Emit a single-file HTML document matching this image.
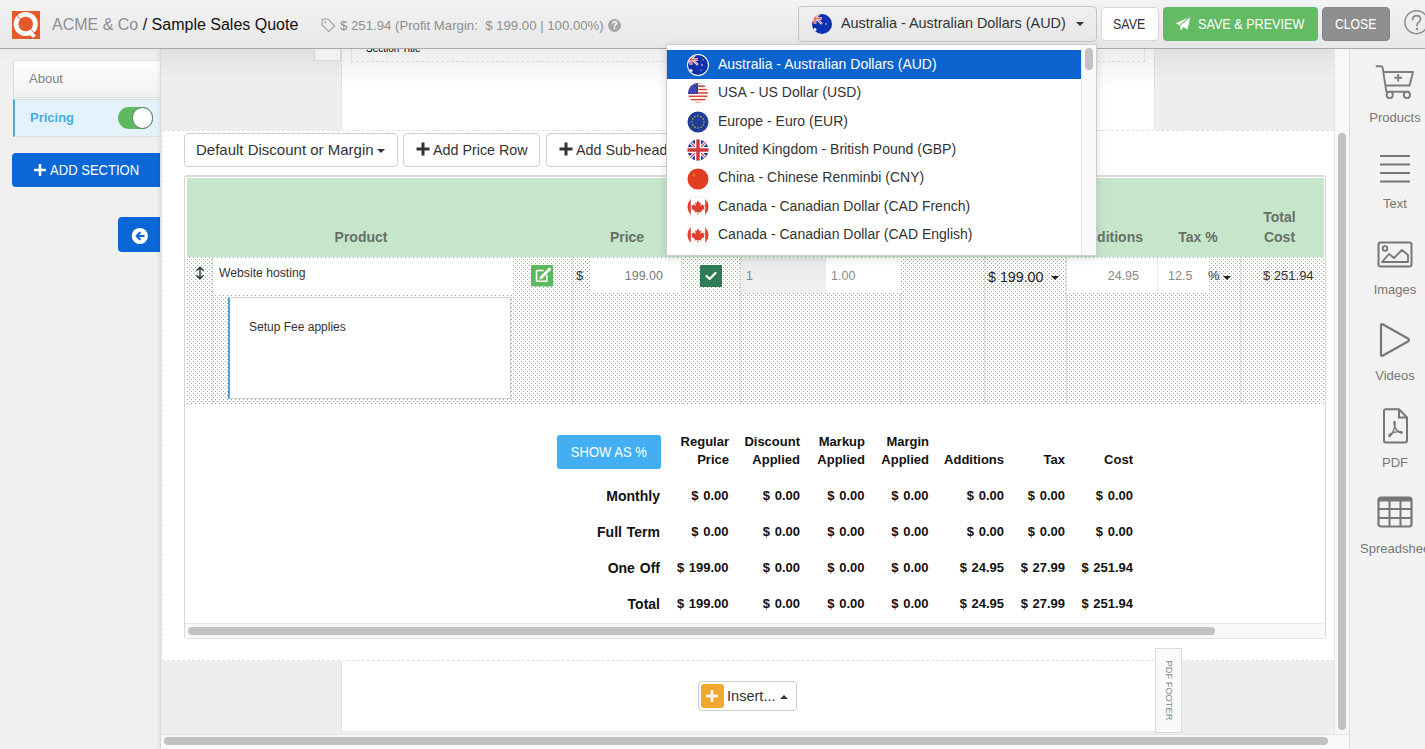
<!DOCTYPE html>
<html><head><meta charset="utf-8">
<style>
*{box-sizing:border-box;margin:0;padding:0}
html,body{width:1425px;height:749px;overflow:hidden;background:#eeeeee;font-family:"Liberation Sans",sans-serif;position:relative}
.a{position:absolute}
.t{position:absolute;white-space:pre;line-height:20px;height:20px}
#hdr{left:0;top:0;width:1425px;height:49px;background:linear-gradient(#f3f3f3,#e7e7e7);border-bottom:1px solid #a9a9a9;z-index:5}
.btn{position:absolute;border-radius:4px;text-align:center;white-space:pre}
</style></head><body>
<!-- left sidebar -->
<div class="a" style="left:0;top:49px;width:160px;height:700px;background:linear-gradient(#e9e9e9,#f0f0f0 12px,#f0f0f0)"></div>
<div class="a" style="left:13px;top:60px;width:160px;height:38px;background:linear-gradient(#fdfdfd,#f1f1f1);border:1px solid #dedede"></div>
<div class="t" style="left:29px;top:69px;font-size:13px;color:#808080">About</div>
<div class="a" style="left:13px;top:99px;width:160px;height:38px;background:#e4f3fb;border:1px solid #d8e3e8;border-left:2px solid #4ba9d9"></div>
<div class="t" style="left:30px;top:108px;font-size:13px;font-weight:700;color:#45aee4">Pricing</div>
<div class="a" style="left:118px;top:107px;width:35px;height:22px;border-radius:11px;background:#5fba5f"></div>
<div class="a" style="left:131.5px;top:107px;width:21.5px;height:22px;border-radius:11px;background:#fff;border:1px solid #4f7a55"></div>
<div class="btn" style="left:12px;top:153px;width:160px;height:34px;background:#0967d6;border-radius:4px"></div>
<svg class="a" style="left:34px;top:164px" width="12" height="12" viewBox="0 0 12 12"><path d="M6 0 V12 M0 6 H12" stroke="#fff" stroke-width="2.6"/></svg>
<div class="t" style="left:50px;top:160px;font-size:14.5px;color:#fff;transform:scaleX(0.9);transform-origin:0 0">ADD SECTION</div>
<div class="btn" style="left:118px;top:217px;width:50px;height:35px;background:#0967d6;border-radius:4px"></div>
<svg class="a" style="left:131px;top:227px" width="17" height="17" viewBox="0 0 16 16">
  <circle cx="8.3" cy="8.5" r="7.6" fill="#fff"/>
  <path d="M12 8.5 H5.3 M8.3 5.5 L5.3 8.5 L8.3 11.5" fill="none" stroke="#0967d6" stroke-width="2" stroke-linecap="round" stroke-linejoin="round"/>
</svg>

<!-- main canvas -->
<div class="a" style="left:160px;top:49px;width:1190px;height:700px;background:#eeeeee;border-left:1px solid #dadada;box-shadow:-1px 0 3px rgba(0,0,0,0.08)"></div>
<!-- top shadow under header -->
<div class="a" style="left:161px;top:49px;width:1173px;height:30px;background:linear-gradient(rgba(0,0,0,0.06),rgba(0,0,0,0))"></div>
<!-- page (top) -->
<div class="a" style="left:341px;top:49px;width:814px;height:82px;background:#fff;border-left:1px solid #e4e4e4;border-right:1px solid #e4e4e4"></div>
<div class="a" style="left:341px;top:49px;width:814px;height:40px;background:linear-gradient(rgba(0,0,0,0.07),rgba(0,0,0,0))"></div>
<div class="a" style="left:314px;top:49px;width:27px;height:12px;background:#f1f1f1;border:1px solid #d8d8d8;border-top:none"></div>
<div class="a" style="left:351px;top:40px;width:794px;height:22px;border:1px dashed #d9d9d9;overflow:hidden"></div>
<div class="t" style="left:366px;top:39px;font-size:10px;color:#000">Section Title</div>

<!-- pricing panel -->
<div class="a" style="left:162px;top:130px;width:1172px;height:531px;background:#fff;border-top:1px dashed #e0e0e0;border-bottom:1px dashed #e0e0e0;border-left:1px dashed #e8e8e8"></div>

<!-- toolbar buttons -->
<div class="btn" style="left:184px;top:133px;width:214px;height:34px;background:#fff;border:1px solid #cfcfcf;border-radius:4px"></div>
<div class="t" style="left:196px;top:140px;font-size:15px;color:#333">Default Discount or Margin</div>
<div class="a" style="left:377px;top:149px;width:0;height:0;border-left:4px solid transparent;border-right:4px solid transparent;border-top:4px solid #333"></div>
<div class="btn" style="left:403px;top:133px;width:137px;height:34px;background:#fff;border:1px solid #cfcfcf;border-radius:4px"></div>
<svg class="a" style="left:416px;top:142px" width="14" height="14" viewBox="0 0 14 14"><path d="M7 0.5 V13.5 M0.5 7 H13.5" stroke="#333" stroke-width="3"/></svg>
<div class="t" style="left:433px;top:140px;font-size:14.3px;color:#333">Add Price Row</div>
<div class="btn" style="left:546px;top:133px;width:137px;height:34px;background:#fff;border:1px solid #cfcfcf;border-radius:4px"></div>
<svg class="a" style="left:559px;top:142px" width="14" height="14" viewBox="0 0 14 14"><path d="M7 0.5 V13.5 M0.5 7 H13.5" stroke="#333" stroke-width="3"/></svg>
<div class="t" style="left:576px;top:140px;font-size:14.3px;color:#333">Add Sub-heading</div>

<!-- table container -->
<div class="a" style="left:184px;top:175px;width:1142px;height:464px;background:#fff;border:1px solid #d6d6d6;border-top:2px solid #dadada;border-bottom:2px solid #e2e2e2;border-radius:3px"></div>
<!-- green header -->
<div class="a" style="left:187px;top:178px;width:1137px;height:79px;background:#c6e6cb"></div>
<div class="t" style="left:186px;width:350px;text-align:center;top:227px;font-size:14px;font-weight:700;color:#687068">Product</div>
<div class="t" style="left:573px;width:108px;text-align:center;top:227px;font-size:14px;font-weight:700;color:#687068">Price</div>
<div class="t" style="left:1066px;width:77px;text-align:right;top:227px;font-size:14px;font-weight:700;color:#687068">Additions</div>
<div class="t" style="left:1156px;width:84px;text-align:center;top:227px;font-size:14px;font-weight:700;color:#687068">Tax %</div>
<div class="t" style="left:1240px;width:79px;text-align:center;top:207px;font-size:14px;font-weight:700;color:#687068;line-height:20px;height:40px">Total
Cost</div>

<!-- dotted row -->
<svg class="a" style="left:187px;top:257px" width="1137" height="147">
  <defs><pattern id="dots" width="4" height="4" patternUnits="userSpaceOnUse">
    <rect width="4" height="4" fill="#fff"/>
    <rect x="2" y="0" width="1" height="1" fill="#8ea78e"/>
    <rect x="0" y="2" width="1" height="1" fill="#8ea78e"/>
  </pattern></defs>
  <rect width="1137" height="147" fill="url(#dots)"/>
  <path d="M25.5 0 V147 M385.5 0 V147 M494.5 0 V147 M553.5 0 V147 M713.5 0 V147 M797.5 0 V147 M879.5 0 V147 M1053.5 0 V147" stroke="#d9e2d9" stroke-width="1"/>
</svg>
<!-- drag handle -->
<svg class="a" style="left:195px;top:266px" width="10" height="14" viewBox="0 0 10 14">
  <path d="M5 1.5 V12.5" stroke="#2a3f30" stroke-width="1.5"/>
  <path d="M2 4.3 L5 1.2 L8 4.3 M2 9.7 L5 12.8 L8 9.7" fill="none" stroke="#2a3f30" stroke-width="1.6" stroke-linejoin="round" stroke-linecap="round"/>
</svg>
<div class="a" style="left:213px;top:258px;width:299px;height:36px;background:#fff"></div>
<div class="t" style="left:219px;top:263px;font-size:12.2px;color:#333">Website hosting</div>
<!-- edit btn -->
<svg class="a" style="left:531px;top:265px" width="22" height="22" viewBox="0 0 22 22">
  <rect x="0" y="0" width="22" height="21.5" rx="1.5" fill="#5cb85c"/>
  <path d="M12.5 5.5 H6 Q5.5 5.5 5.5 6 V15.8 Q5.5 16.3 6 16.3 H15.3 Q15.8 16.3 15.8 15.8 V10" fill="none" stroke="#fff" stroke-width="1.6"/>
  <path d="M9.5 13.2 L17 5.7" stroke="#fff" stroke-width="3" stroke-linecap="butt"/>
  <path d="M17.6 5.1 L18.6 4.1" stroke="#fff" stroke-width="3" stroke-linecap="round"/>
  <path d="M8.3 14.6 L9.2 12.2 L10.6 13.6 Z" fill="#fff"/>
</svg>
<div class="t" style="left:576px;top:266px;font-size:13px;color:#333">$</div>
<div class="a" style="left:590px;top:258px;width:91px;height:35px;background:#fff"></div>
<div class="t" style="left:590px;width:73px;text-align:right;top:266px;font-size:12.5px;color:#7a7a7a">199.00</div>
<!-- checkbox -->
<div class="a" style="left:700px;top:265px;width:22px;height:22px;background:#2e7c55;border-radius:1px"></div>
<svg class="a" style="left:704px;top:269px" width="14" height="14" viewBox="0 0 14 14">
  <path d="M2.5 7 L5.7 10 L11.5 4" fill="none" stroke="#fff" stroke-width="2.2" stroke-linecap="round" stroke-linejoin="round"/>
</svg>
<div class="a" style="left:741px;top:258px;width:85px;height:35px;background:linear-gradient(#ebebeb,#f0f0f0)"></div>
<div class="t" style="left:746px;top:266px;font-size:12.5px;color:#888">1</div>
<div class="a" style="left:826px;top:258px;width:75px;height:35px;background:#fff"></div>
<div class="t" style="left:831px;top:266px;font-size:12.5px;color:#888">1.00</div>
<div class="t" style="left:988px;top:267px;font-size:15px;color:#222;transform:scaleX(0.95);transform-origin:0 0">$ 199.00</div>
<div class="a" style="left:1051px;top:275.5px;width:0;height:0;border-left:4px solid transparent;border-right:4px solid transparent;border-top:4px solid #222"></div>
<div class="a" style="left:1067px;top:258px;width:90px;height:35px;background:#fff"></div>
<div class="t" style="left:1067px;width:72px;text-align:right;top:266px;font-size:12.5px;color:#888">24.95</div>
<div class="a" style="left:1157px;top:258px;width:51px;height:35px;background:#fff;border-left:1px solid #e8e8e8"></div>
<div class="t" style="left:1168px;top:266px;font-size:12.5px;color:#888">12.5</div>
<div class="t" style="left:1208px;top:266px;font-size:13px;color:#333">%</div>
<div class="a" style="left:1222.5px;top:275.5px;width:0;height:0;border-left:4px solid transparent;border-right:4px solid transparent;border-top:4px solid #222"></div>
<div class="t" style="left:1263px;top:266px;font-size:13px;color:#333">$ 251.94</div>
<!-- note -->
<div class="a" style="left:228px;top:297px;width:283px;height:102px;background:#fff;border:1px solid #d0d0d0;border-left:2px solid #4ba3df"></div>
<div class="t" style="left:249px;top:317px;font-size:12px;color:#333">Setup Fee applies</div>

<!-- summary -->
<div class="btn" style="left:557px;top:435px;width:104px;height:34px;background:#44aef2;border-radius:3px;color:#fff;font-size:14px;line-height:34px"><span style="display:inline-block;transform:scaleX(0.93)">SHOW AS %</span></div>
<div style="position:absolute;left:0;top:0;font-size:13px;font-weight:700;color:#111">
  <div class="t" style="left:629px;width:100px;text-align:right;top:432px">Regular</div>
  <div class="t" style="left:629px;width:100px;text-align:right;top:450px">Price</div>
  <div class="t" style="left:700px;width:100px;text-align:right;top:432px">Discount</div>
  <div class="t" style="left:700px;width:100px;text-align:right;top:450px">Applied</div>
  <div class="t" style="left:765px;width:100px;text-align:right;top:432px">Markup</div>
  <div class="t" style="left:765px;width:100px;text-align:right;top:450px">Applied</div>
  <div class="t" style="left:829px;width:100px;text-align:right;top:432px">Margin</div>
  <div class="t" style="left:829px;width:100px;text-align:right;top:450px">Applied</div>
  <div class="t" style="left:904px;width:100px;text-align:right;top:450px">Additions</div>
  <div class="t" style="left:965px;width:100px;text-align:right;top:450px">Tax</div>
  <div class="t" style="left:1033px;width:100px;text-align:right;top:450px">Cost</div>
</div>
<div id="sumrows" style="position:absolute;left:0;top:1px;font-size:13px;font-weight:700;color:#111;word-spacing:1px"><div class="t" style="left:500px;width:160px;text-align:right;top:485px;font-size:14px">Monthly</div><div class="t" style="left:628.5px;width:100px;text-align:right;top:485px">$ 0.00</div><div class="t" style="left:700px;width:100px;text-align:right;top:485px">$ 0.00</div><div class="t" style="left:764.5px;width:100px;text-align:right;top:485px">$ 0.00</div><div class="t" style="left:828.5px;width:100px;text-align:right;top:485px">$ 0.00</div><div class="t" style="left:904px;width:100px;text-align:right;top:485px">$ 0.00</div><div class="t" style="left:965px;width:100px;text-align:right;top:485px">$ 0.00</div><div class="t" style="left:1033px;width:100px;text-align:right;top:485px">$ 0.00</div><div class="t" style="left:500px;width:160px;text-align:right;top:521px;font-size:14px">Full Term</div><div class="t" style="left:628.5px;width:100px;text-align:right;top:521px">$ 0.00</div><div class="t" style="left:700px;width:100px;text-align:right;top:521px">$ 0.00</div><div class="t" style="left:764.5px;width:100px;text-align:right;top:521px">$ 0.00</div><div class="t" style="left:828.5px;width:100px;text-align:right;top:521px">$ 0.00</div><div class="t" style="left:904px;width:100px;text-align:right;top:521px">$ 0.00</div><div class="t" style="left:965px;width:100px;text-align:right;top:521px">$ 0.00</div><div class="t" style="left:1033px;width:100px;text-align:right;top:521px">$ 0.00</div><div class="t" style="left:500px;width:160px;text-align:right;top:557px;font-size:14px">One Off</div><div class="t" style="left:628.5px;width:100px;text-align:right;top:557px">$ 199.00</div><div class="t" style="left:700px;width:100px;text-align:right;top:557px">$ 0.00</div><div class="t" style="left:764.5px;width:100px;text-align:right;top:557px">$ 0.00</div><div class="t" style="left:828.5px;width:100px;text-align:right;top:557px">$ 0.00</div><div class="t" style="left:904px;width:100px;text-align:right;top:557px">$ 24.95</div><div class="t" style="left:965px;width:100px;text-align:right;top:557px">$ 27.99</div><div class="t" style="left:1033px;width:100px;text-align:right;top:557px">$ 251.94</div><div class="t" style="left:500px;width:160px;text-align:right;top:593px;font-size:14px">Total</div><div class="t" style="left:628.5px;width:100px;text-align:right;top:593px">$ 199.00</div><div class="t" style="left:700px;width:100px;text-align:right;top:593px">$ 0.00</div><div class="t" style="left:764.5px;width:100px;text-align:right;top:593px">$ 0.00</div><div class="t" style="left:828.5px;width:100px;text-align:right;top:593px">$ 0.00</div><div class="t" style="left:904px;width:100px;text-align:right;top:593px">$ 24.95</div><div class="t" style="left:965px;width:100px;text-align:right;top:593px">$ 27.99</div><div class="t" style="left:1033px;width:100px;text-align:right;top:593px">$ 251.94</div></div>

<!-- table scrollbar -->
<div class="a" style="left:185px;top:623px;width:1140px;height:15px;background:#f8f8f8;border-top:1px solid #e8e8e8"></div>
<div class="a" style="left:188px;top:627px;width:1027px;height:8px;background:#c1c1c1;border-radius:4px"></div>

<!-- page bottom -->
<div class="a" style="left:341px;top:661px;width:814px;height:71px;background:#fff;border-left:1px solid #e2e2e2;border-bottom:1px solid #e6e6e6"></div>
<div class="a" style="left:1155px;top:648px;width:27px;height:85px;background:#fafafa;border:1px solid #dadada"></div>
<div class="a" style="left:1155px;top:648px;width:85px;height:27px;transform-origin:0 0;transform:translate(27px,0) rotate(90deg);text-align:center;line-height:27px;font-size:9.3px;color:#888;white-space:pre">PDF FOOTER</div>
<div class="btn" style="left:698px;top:681px;width:99px;height:30px;background:#fff;border:1px solid #cccccc;border-radius:4px"></div>
<div class="a" style="left:701px;top:684px;width:23px;height:24px;background:#f0a92e;border-radius:3px"></div>
<svg class="a" style="left:705px;top:689px" width="14" height="14" viewBox="0 0 14 14"><path d="M7 1 V13 M1 7 H13" stroke="#fff" stroke-width="2.7"/></svg>
<div class="t" style="left:727px;top:686px;font-size:15px;color:#333;transform:scaleX(0.97);transform-origin:0 0">Insert...</div>
<div class="a" style="left:780px;top:695px;width:0;height:0;border-left:4px solid transparent;border-right:4px solid transparent;border-bottom:4px solid #333"></div>

<!-- vertical scrollbar -->
<div class="a" style="left:1334px;top:49px;width:15px;height:685px;background:#f8f8f8;border-left:1px solid #e6e6e6"></div>
<div class="a" style="left:1338px;top:133px;width:8px;height:597px;background:#c1c1c1;border-radius:4px"></div>
<!-- horizontal scrollbar -->
<div class="a" style="left:161px;top:734px;width:1188px;height:15px;background:#f8f8f8;border-top:1px solid #e6e6e6"></div>
<div class="a" style="left:164px;top:737px;width:1164px;height:8px;background:#c1c1c1;border-radius:4px"></div>

<!-- right sidebar -->
<div class="a" style="left:1349px;top:49px;width:76px;height:700px;background:#f2f2f2;border-left:1px solid #dcdcdc"></div>
<svg class="a" style="left:1375px;top:64px" width="40" height="36" viewBox="0 0 40 36">
  <path d="M1.5 2.2 H6.2 Q7.4 2.2 7.6 3.4 L11.4 27.8 H34" fill="none" stroke="#7c7c7c" stroke-width="1.9" stroke-linejoin="round" stroke-linecap="round"/>
  <path d="M8.6 8 H38 L34.6 21.5 H10.6" fill="none" stroke="#7c7c7c" stroke-width="1.9" stroke-linejoin="round"/>
  <circle cx="14.7" cy="31" r="3.1" fill="none" stroke="#7c7c7c" stroke-width="1.9"/>
  <circle cx="31.9" cy="31" r="3.1" fill="none" stroke="#7c7c7c" stroke-width="1.9"/>
  <path d="M23.2 10 V17.5 M19.4 13.8 H27" stroke="#7c7c7c" stroke-width="1.9"/>
</svg>
<div class="t" style="left:1355px;width:80px;text-align:center;top:108px;font-size:13px;color:#777">Products</div>
<svg class="a" style="left:1379px;top:154px" width="32" height="30" viewBox="0 0 32 30">
  <path d="M1 2 H31 M1 10.5 H31 M1 19 H31 M1 27.5 H31" stroke="#777" stroke-width="2"/>
</svg>
<div class="t" style="left:1355px;width:80px;text-align:center;top:194px;font-size:13px;color:#777">Text</div>
<svg class="a" style="left:1377px;top:241px" width="36" height="28" viewBox="0 0 36 28">
  <rect x="1.5" y="1.5" width="33" height="24" rx="2" fill="none" stroke="#777" stroke-width="2"/>
  <circle cx="8" cy="7.5" r="2.3" fill="none" stroke="#777" stroke-width="1.8"/>
  <path d="M5 21 L12 13 L17 17 L25 9 L31 14 V21 Z" fill="none" stroke="#777" stroke-width="1.8" stroke-linejoin="round"/>
</svg>
<div class="t" style="left:1355px;width:80px;text-align:center;top:280px;font-size:13px;color:#777">Images</div>
<svg class="a" style="left:1378px;top:322px" width="34" height="36" viewBox="0 0 34 36">
  <path d="M3 3.5 Q3 1.5 5 2.5 L30 16.5 Q32 18 30 19.5 L5 33.5 Q3 34.5 3 32.5 Z" fill="none" stroke="#777" stroke-width="2.2" stroke-linejoin="round"/>
</svg>
<div class="t" style="left:1355px;width:80px;text-align:center;top:366px;font-size:13px;color:#777">Videos</div>
<svg class="a" style="left:1382px;top:408px" width="27" height="36" viewBox="0 0 27 36">
  <path d="M2 3 Q2 1.2 4 1.2 H17 L25 9.5 V32.5 Q25 34.5 23 34.5 H4 Q2 34.5 2 32.5 Z" fill="none" stroke="#777" stroke-width="2" stroke-linejoin="round"/>
  <path d="M17 1.2 V9.5 H25" fill="none" stroke="#777" stroke-width="2"/>
  <path d="M8 26 Q6 28 7.5 28.5 Q10 28 13 18 Q13.5 13 12.3 13.5 Q11 15 14 21 Q17 25 20 25 Q21 23.5 17 23.5 Q13 23.5 8 26 Z" fill="none" stroke="#777" stroke-width="1.4" stroke-linejoin="round"/>
</svg>
<div class="t" style="left:1355px;width:80px;text-align:center;top:453px;font-size:13px;color:#777">PDF</div>
<svg class="a" style="left:1377px;top:496px" width="36" height="32" viewBox="0 0 36 32">
  <rect x="1.5" y="1.5" width="33" height="29" rx="2.5" fill="none" stroke="#777" stroke-width="2.2"/>
  <rect x="1.5" y="1.5" width="33" height="4" fill="#777"/>
  <path d="M1.5 13 H34.5 M1.5 22 H34.5 M12.5 1.5 V30.5 M23.5 1.5 V30.5" stroke="#777" stroke-width="2"/>
</svg>
<div class="t" style="left:1360px;top:539px;font-size:13px;color:#777">Spreadsheet</div>

<!-- dropdown -->
<div class="a" style="left:666px;top:44px;width:431px;height:212px;background:#fff;border:1px solid #cdcdcd;box-shadow:0 3px 9px rgba(0,0,0,0.13);overflow:hidden;z-index:6">
<div class="a" style="left:0;top:5px;width:414px;height:29px;background:#0b63ce"></div>
<div class="a" style="left:20px;top:8.7px"><svg width="22" height="22" viewBox="0 0 22 22"><defs><clipPath id="cl0"><circle cx="11" cy="11" r="10"/></clipPath></defs>
<circle cx="11" cy="11" r="11" fill="#fff"/>
<g clip-path="url(#cl0)"><rect width="22" height="22" fill="#0d30ad"/>
<path d="M-2 -1 L11 11 M10 -1 L-2 11" stroke="#fff" stroke-width="2.2"/><path d="M-2 -1 L11 11 M10 -1 L-2 11" stroke="#e0514a" stroke-width="0.9"/>
<path d="M4 -1 V11 M-2 5.5 H11" stroke="#fff" stroke-width="2.6"/><path d="M4 -1 V11 M-2 5.5 H11" stroke="#e6604f" stroke-width="1.5"/>
<circle cx="4" cy="16.5" r="1.5" fill="#fff"/><circle cx="15" cy="11" r="0.8" fill="#fff"/><circle cx="16" cy="6" r="0.6" fill="#fff"/><circle cx="14" cy="16" r="0.6" fill="#fff"/></g></svg></div>
<div class="t" style="left:51px;top:8.6px;font-size:14px;color:#fff">Australia - Australian Dollars (AUD)</div>
<div class="a" style="left:20px;top:37.2px"><svg width="22" height="22" viewBox="0 0 22 22"><defs><clipPath id="cl1"><circle cx="11" cy="11" r="10"/></clipPath></defs>
<g clip-path="url(#cl1)"><rect x="0" y="0.00" width="22" height="1.69" fill="#d9463a"/><rect x="0" y="1.69" width="22" height="1.69" fill="#fff"/><rect x="0" y="3.38" width="22" height="1.69" fill="#d9463a"/><rect x="0" y="5.08" width="22" height="1.69" fill="#fff"/><rect x="0" y="6.77" width="22" height="1.69" fill="#d9463a"/><rect x="0" y="8.46" width="22" height="1.69" fill="#fff"/><rect x="0" y="10.15" width="22" height="1.69" fill="#d9463a"/><rect x="0" y="11.85" width="22" height="1.69" fill="#fff"/><rect x="0" y="13.54" width="22" height="1.69" fill="#d9463a"/><rect x="0" y="15.23" width="22" height="1.69" fill="#fff"/><rect x="0" y="16.92" width="22" height="1.69" fill="#d9463a"/><rect x="0" y="18.62" width="22" height="1.69" fill="#fff"/><rect x="0" y="20.31" width="22" height="1.69" fill="#d9463a"/><rect width="11" height="11.8" fill="#2f3aa6"/><circle cx="2.0" cy="2.2" r="0.45" fill="#aab0ff"/><circle cx="4.2" cy="2.2" r="0.45" fill="#aab0ff"/><circle cx="6.4" cy="2.2" r="0.45" fill="#aab0ff"/><circle cx="8.6" cy="2.2" r="0.45" fill="#aab0ff"/><circle cx="3.1" cy="4.1" r="0.45" fill="#aab0ff"/><circle cx="5.3" cy="4.1" r="0.45" fill="#aab0ff"/><circle cx="7.5" cy="4.1" r="0.45" fill="#aab0ff"/><circle cx="9.7" cy="4.1" r="0.45" fill="#aab0ff"/><circle cx="2.0" cy="6.0" r="0.45" fill="#aab0ff"/><circle cx="4.2" cy="6.0" r="0.45" fill="#aab0ff"/><circle cx="6.4" cy="6.0" r="0.45" fill="#aab0ff"/><circle cx="8.6" cy="6.0" r="0.45" fill="#aab0ff"/><circle cx="3.1" cy="7.9" r="0.45" fill="#aab0ff"/><circle cx="5.3" cy="7.9" r="0.45" fill="#aab0ff"/><circle cx="7.5" cy="7.9" r="0.45" fill="#aab0ff"/><circle cx="9.7" cy="7.9" r="0.45" fill="#aab0ff"/><circle cx="2.0" cy="9.8" r="0.45" fill="#aab0ff"/><circle cx="4.2" cy="9.8" r="0.45" fill="#aab0ff"/><circle cx="6.4" cy="9.8" r="0.45" fill="#aab0ff"/><circle cx="8.6" cy="9.8" r="0.45" fill="#aab0ff"/></g></svg></div>
<div class="t" style="left:51px;top:37.1px;font-size:14px;color:#333">USA - US Dollar (USD)</div>
<div class="a" style="left:20px;top:65.6px"><svg width="22" height="22" viewBox="0 0 22 22"><circle cx="11" cy="11" r="10.5" fill="#1f3c99"/><circle cx="17.00" cy="11.00" r="0.7" fill="#f5d130"/><circle cx="16.20" cy="14.00" r="0.7" fill="#f5d130"/><circle cx="14.00" cy="16.20" r="0.7" fill="#f5d130"/><circle cx="11.00" cy="17.00" r="0.7" fill="#f5d130"/><circle cx="8.00" cy="16.20" r="0.7" fill="#f5d130"/><circle cx="5.80" cy="14.00" r="0.7" fill="#f5d130"/><circle cx="5.00" cy="11.00" r="0.7" fill="#f5d130"/><circle cx="5.80" cy="8.00" r="0.7" fill="#f5d130"/><circle cx="8.00" cy="5.80" r="0.7" fill="#f5d130"/><circle cx="11.00" cy="5.00" r="0.7" fill="#f5d130"/><circle cx="14.00" cy="5.80" r="0.7" fill="#f5d130"/><circle cx="16.20" cy="8.00" r="0.7" fill="#f5d130"/></svg></div>
<div class="t" style="left:51px;top:65.5px;font-size:14px;color:#333">Europe - Euro (EUR)</div>
<div class="a" style="left:20px;top:94.0px"><svg width="22" height="22" viewBox="0 0 22 22"><defs><clipPath id="cl3"><circle cx="11" cy="11" r="10.5"/></clipPath></defs>
<g clip-path="url(#cl3)"><rect width="22" height="22" fill="#22409a"/>
<path d="M0 0 L22 22 M22 0 L0 22" stroke="#fff" stroke-width="3.2"/><path d="M0 0 L22 22 M22 0 L0 22" stroke="#cf3a3d" stroke-width="1.2"/>
<path d="M11 0 V22 M0 11 H22" stroke="#fff" stroke-width="6"/><path d="M11 0 V22 M0 11 H22" stroke="#cf3a3d" stroke-width="3.4"/></g></svg></div>
<div class="t" style="left:51px;top:93.9px;font-size:14px;color:#333">United Kingdom - British Pound (GBP)</div>
<div class="a" style="left:20px;top:122.5px"><svg width="22" height="22" viewBox="0 0 22 22"><circle cx="11" cy="11" r="10.5" fill="#e23d22"/><circle cx="7" cy="7" r="1.6" fill="#f1c232" opacity="0.35"/></svg></div>
<div class="t" style="left:51px;top:122.4px;font-size:14px;color:#333">China - Chinese Renminbi (CNY)</div>
<div class="a" style="left:20px;top:150.9px"><svg width="22" height="22" viewBox="0 0 22 22"><defs><clipPath id="cl5"><circle cx="11" cy="11" r="10.5"/></clipPath></defs>
<circle cx="11" cy="11" r="10.7" fill="#fff" stroke="#e8e8e8" stroke-width="0.6"/>
<g clip-path="url(#cl5)"><rect x="0" y="0" width="3.8" height="22" fill="#e0402f"/><rect x="18.2" y="0" width="3.8" height="22" fill="#e0402f"/></g>
<path d="M11 4.2 L12.4 7 L13.9 6.3 L13.4 10 L15.6 8.2 L16.1 9.6 L17.8 9.3 L16.9 11.9 L17.8 12.5 L13.9 15.2 L14.2 16.5 L11.4 16 V19 H10.6 V16 L7.8 16.5 L8.1 15.2 L4.2 12.5 L5.1 11.9 L4.2 9.3 L5.9 9.6 L6.4 8.2 L8.6 10 L8.1 6.3 L9.6 7 Z" fill="#e0402f"/></svg></div>
<div class="t" style="left:51px;top:150.8px;font-size:14px;color:#333">Canada - Canadian Dollar (CAD French)</div>
<div class="a" style="left:20px;top:179.4px"><svg width="22" height="22" viewBox="0 0 22 22"><defs><clipPath id="cl6"><circle cx="11" cy="11" r="10.5"/></clipPath></defs>
<circle cx="11" cy="11" r="10.7" fill="#fff" stroke="#e8e8e8" stroke-width="0.6"/>
<g clip-path="url(#cl6)"><rect x="0" y="0" width="3.8" height="22" fill="#e0402f"/><rect x="18.2" y="0" width="3.8" height="22" fill="#e0402f"/></g>
<path d="M11 4.2 L12.4 7 L13.9 6.3 L13.4 10 L15.6 8.2 L16.1 9.6 L17.8 9.3 L16.9 11.9 L17.8 12.5 L13.9 15.2 L14.2 16.5 L11.4 16 V19 H10.6 V16 L7.8 16.5 L8.1 15.2 L4.2 12.5 L5.1 11.9 L4.2 9.3 L5.9 9.6 L6.4 8.2 L8.6 10 L8.1 6.3 L9.6 7 Z" fill="#e0402f"/></svg></div>
<div class="t" style="left:51px;top:179.3px;font-size:14px;color:#333">Canada - Canadian Dollar (CAD English)</div>
<div class="a" style="left:20px;top:207.8px"><svg width="22" height="22" viewBox="0 0 22 22"><defs><clipPath id="cl7"><circle cx="11" cy="11" r="10.5"/></clipPath></defs>
<circle cx="11" cy="11" r="10.7" fill="#fff" stroke="#e8e8e8" stroke-width="0.6"/>
<g clip-path="url(#cl7)"><rect x="0" y="0" width="3.8" height="22" fill="#e0402f"/><rect x="18.2" y="0" width="3.8" height="22" fill="#e0402f"/></g>
<path d="M11 4.2 L12.4 7 L13.9 6.3 L13.4 10 L15.6 8.2 L16.1 9.6 L17.8 9.3 L16.9 11.9 L17.8 12.5 L13.9 15.2 L14.2 16.5 L11.4 16 V19 H10.6 V16 L7.8 16.5 L8.1 15.2 L4.2 12.5 L5.1 11.9 L4.2 9.3 L5.9 9.6 L6.4 8.2 L8.6 10 L8.1 6.3 L9.6 7 Z" fill="#e0402f"/></svg></div>
<div class="a" style="left:414px;top:0;width:16px;height:212px;background:#fafafa;border-left:1px solid #e8e8e8"></div>
<div class="a" style="left:418px;top:3px;width:8px;height:22px;background:#c2c2c2;border-radius:4px"></div>
</div>

<!-- header -->
<div class="a" id="hdr">
  <!-- logo -->
  <svg class="a" style="left:12px;top:11px" width="28" height="28" viewBox="0 0 28 28">
    <rect width="28" height="28" fill="#e5592b"/>
    <circle cx="13.7" cy="13" r="9.7" fill="none" stroke="#fff" stroke-width="4.8"/>
    <path d="M18 19 L24 24.5 L21 27 L15.5 21.5 Z" fill="#fff"/>
    <line x1="4" y1="3.5" x2="24" y2="23.5" stroke="#d9532a" stroke-width="0.9"/>
  </svg>
  <div class="t" style="left:52px;top:15px;font-size:16px;color:#8f8f8f">ACME &amp; Co <span style="color:#111">/ Sample Sales Quote</span></div>
  <!-- tag icon -->
  <svg class="a" style="left:321px;top:18px" width="15" height="15" viewBox="0 0 15 15">
    <path d="M1.2 1.2 H7 L13.6 7.8 L7.8 13.6 L1.2 7 Z" fill="none" stroke="#aaa" stroke-width="1.3" stroke-linejoin="round"/>
    <circle cx="4.3" cy="4.3" r="1.1" fill="#aaa"/>
  </svg>
  <div class="t" style="left:340px;top:16px;font-size:13.2px;color:#8f8f8f">$ 251.94 (Profit Margin:  $ 199.00 | 100.00%)</div>
  <svg class="a" style="left:608px;top:19px" width="13" height="13" viewBox="0 0 13 13">
    <circle cx="6.5" cy="6.5" r="6.5" fill="#a6a6a6"/>
    <text x="6.5" y="10.3" text-anchor="middle" font-family="Liberation Sans" font-weight="700" font-size="10" fill="#fff">?</text>
  </svg>

  <!-- currency select -->
  <div class="btn" style="left:798px;top:6px;width:299px;height:36px;background:linear-gradient(#f0f0f0,#e6e6e6);border:1px solid #c4c4c4;border-radius:4px"></div>
  <div class="a" style="left:811px;top:13px"><svg width="22" height="22" viewBox="0 0 22 22"><defs><clipPath id="cau0"><circle cx="11" cy="11" r="10"/></clipPath></defs>

<g clip-path="url(#cau0)"><rect width="22" height="22" fill="#0d30ad"/>
<path d="M-2 -1 L11 11 M10 -1 L-2 11" stroke="#fff" stroke-width="2.2"/><path d="M-2 -1 L11 11 M10 -1 L-2 11" stroke="#e0514a" stroke-width="0.9"/>
<path d="M4 -1 V11 M-2 5.5 H11" stroke="#fff" stroke-width="2.6"/><path d="M4 -1 V11 M-2 5.5 H11" stroke="#e6604f" stroke-width="1.5"/>
<circle cx="4" cy="16.5" r="1.5" fill="#fff"/><circle cx="15" cy="11" r="0.8" fill="#cfe0ff"/></g></svg></div>
  <div class="t" style="left:841px;top:13px;font-size:14.4px;color:#333">Australia - Australian Dollars (AUD)</div>
  <div class="a" style="left:1076px;top:22px;width:0;height:0;border-left:4px solid transparent;border-right:4px solid transparent;border-top:4px solid #333"></div>

  <!-- buttons -->
  <div class="btn" style="left:1101px;top:7px;width:58px;height:34px;background:#fff;border:1px solid #d6d6d6"></div>
  <div class="t" style="left:1113px;top:14px;font-size:14.5px;color:#333;transform:scaleX(0.86);transform-origin:0 0">SAVE</div>
  <div class="btn" style="left:1163px;top:7px;width:155px;height:34px;background:#63bb64"></div>
  <svg class="a" style="left:1175px;top:16px" width="16" height="16" viewBox="0 0 16 16">
    <path d="M15.5 0.5 L0.5 7.5 L5 9.2 L5.8 14.8 L8.3 11 L12.5 13.5 Z" fill="#fff"/>
    <path d="M15.5 0.5 L5 9.2" stroke="#63bb64" stroke-width="1.1"/>
  </svg>
  <div class="t" style="left:1198px;top:14px;font-size:14.5px;color:#fff;transform:scaleX(0.87);transform-origin:0 0">SAVE &amp; PREVIEW</div>
  <div class="btn" style="left:1322px;top:7px;width:68px;height:34px;background:#8f8f8f;border:1px solid #878787"></div>
  <div class="t" style="left:1335px;top:14px;font-size:14.5px;color:#fff;transform:scaleX(0.84);transform-origin:0 0">CLOSE</div>
  <svg class="a" style="left:1404px;top:10px" width="26" height="26" viewBox="0 0 26 26">
    <circle cx="12.4" cy="12.2" r="11.5" fill="none" stroke="#8a8a8a" stroke-width="1.4"/>
    <path d="M8.6 9.6 Q8.8 5.6 12.8 5.6 Q16.6 5.8 16.6 9 Q16.6 11 14.6 12.2 Q13 13.2 13 15.6" fill="none" stroke="#8a8a8a" stroke-width="1.7" stroke-linecap="round"/>
    <circle cx="13" cy="19" r="1.2" fill="#8a8a8a"/>
  </svg>
</div>

</body></html>
